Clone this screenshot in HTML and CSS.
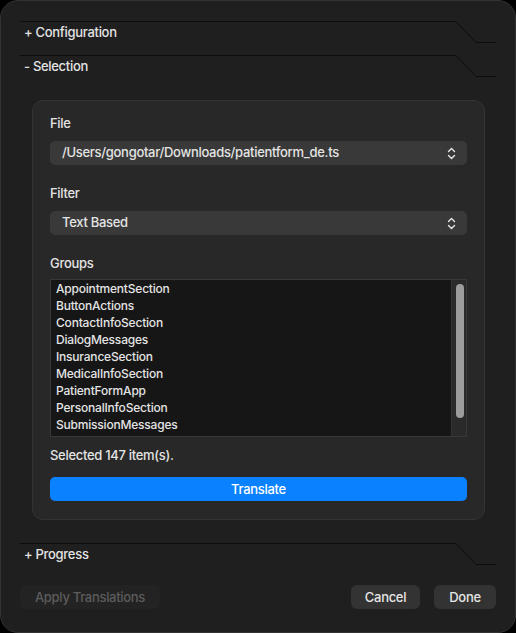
FILE: index.html
```html
<!DOCTYPE html>
<html lang="en">

<head>
    <meta charset="utf-8">
    <link rel="stylesheet" href="styles.css">
</head>

<body>

    <div class="tr-window">

        <div class="tr-section">
            <div class="tr-section-title">+ Configuration</div>
            <svg class="tr-section-tail" width="40" height="22" viewBox="0 0 40 22">
                <path d="M0 0.5 L20 21.5 H40" fill="none" stroke="#0c0c0c" stroke-width="1"/>
            </svg>
        </div>

        <div class="tr-section">
            <div class="tr-section-title">- Selection</div>
            <svg class="tr-section-tail" width="40" height="22" viewBox="0 0 40 22">
                <path d="M0 0.5 L20 21.5 H40" fill="none" stroke="#0c0c0c" stroke-width="1"/>
            </svg>
        </div>

        <div class="tr-group">
            <div class="tr-label">File</div>
            <div class="tr-popup">
                <span>/Users/gongotar/Downloads/patientform_de.ts</span>
                <svg width="9" height="13" viewBox="0 0 9 13">
                    <path d="M1.5 4.5 L4.5 1.5 L7.5 4.5 M1.5 8.5 L4.5 11.5 L7.5 8.5" fill="none" stroke="#e8e8e8" stroke-width="1.4" stroke-linecap="round" stroke-linejoin="round"/>
                </svg>
            </div>

            <div class="tr-label">Filter</div>
            <div class="tr-popup">
                <span>Text Based</span>
                <svg width="9" height="13" viewBox="0 0 9 13">
                    <path d="M1.5 4.5 L4.5 1.5 L7.5 4.5 M1.5 8.5 L4.5 11.5 L7.5 8.5" fill="none" stroke="#e8e8e8" stroke-width="1.4" stroke-linecap="round" stroke-linejoin="round"/>
                </svg>
            </div>

            <div class="tr-label tr-groups">Groups</div>
            <div class="tr-list">
                <div class="tr-list-items">
                    <div>AppointmentSection</div>
                    <div>ButtonActions</div>
                    <div>ContactInfoSection</div>
                    <div>DialogMessages</div>
                    <div>InsuranceSection</div>
                    <div>MedicalInfoSection</div>
                    <div>PatientFormApp</div>
                    <div>PersonalInfoSection</div>
                    <div>SubmissionMessages</div>
                </div>
                <div class="tr-scroll">
                    <div class="tr-scroll-thumb"></div>
                </div>
            </div>

            <div class="tr-label tr-count">Selected 147 item(s).</div>
            <div class="tr-primary">Translate</div>
        </div>

        <div class="tr-section tr-progress">
            <div class="tr-section-title">+ Progress</div>
            <svg class="tr-section-tail" width="40" height="22" viewBox="0 0 40 22">
                <path d="M0 0.5 L20 21.5 H40" fill="none" stroke="#0c0c0c" stroke-width="1"/>
            </svg>
        </div>

        <div class="tr-footer">
            <div class="tr-button tr-disabled">Apply Translations</div>
            <div class="tr-spacer"></div>
            <div class="tr-button tr-cancel">Cancel</div>
            <div class="tr-button tr-done">Done</div>
        </div>

    </div>

</body>

</html>
```

FILE: styles.css
```css
html,
body {
    margin: 0;
    padding: 0;
    background-color: #000000;
}

body {
    font-family: Inter, "Noto Sans", sans-serif;
    font-size: 13px;
    font-weight: 500;
    letter-spacing: -0.3px;
    color: #e4e4e4;
}

/* Window */
.tr-window {
    box-sizing: border-box;
    width: 516px;
    height: 633px;
    padding: 20px 19px 0 19px;
    background-color: #1f1f1f;
    border: 1px solid #333333;
    border-radius: 18px;
    overflow: hidden;
}

/* Section headers with the folded line */
.tr-section {
    display: flex;
    height: 34px;
}

.tr-section-title {
    flex: 1;
    border-top: 1px solid #0c0c0c;
    padding: 2px 0 0 4px;
    line-height: 16px;
}

.tr-section-tail {
    display: block;
    flex: none;
}

/* Group box */
.tr-group {
    margin: 11px 11px 0 12px;
    padding: 14px 17px 18px 17px;
    background-color: #282828;
    border: 1px solid #343434;
    border-radius: 11px;
    display: flex;
    flex-direction: column;
}

.tr-label {
    line-height: 16px;
    margin-bottom: 10px;
}

.tr-popup {
    height: 24px;
    display: flex;
    align-items: center;
    justify-content: space-between;
    padding: 0 11px 0 12px;
    background-color: #393939;
    border-radius: 5px;
    margin-bottom: 20px;
}

.tr-popup span {
    margin-top: -2px;
}

.tr-popup svg {
    display: block;
}

.tr-groups {
    margin-bottom: 8px;
}

/* List */
.tr-list {
    display: flex;
    height: 156px;
    background-color: #161616;
    border: 1px solid #383838;
    margin-bottom: 10px;
}

.tr-list-items {
    flex: 1;
    padding: 0 0 0 5px;
    font-size: 12px;
    letter-spacing: -0.2px;
}

.tr-list-items div {
    height: 17px;
    line-height: 17px;
}

.tr-scroll {
    width: 15px;
    background-color: #2a2a2a;
    border-left: 1px solid #333333;
    padding: 4px 0 0 4px;
    box-sizing: border-box;
}

.tr-scroll-thumb {
    width: 8px;
    height: 134px;
    border-radius: 4px;
    background-color: #9c9c9c;
}

.tr-count {
    margin-bottom: 14px;
}

.tr-primary {
    height: 24px;
    line-height: 24px;
    text-align: center;
    background-color: #0a82ff;
    color: #ffffff;
    border-radius: 5px;
}

.tr-progress {
    margin-top: 23px;
}

/* Bottom buttons */
.tr-footer {
    display: flex;
    gap: 14px;
    margin-top: 8px;
}

.tr-spacer {
    flex: 1;
}

.tr-button {
    height: 24px;
    line-height: 24px;
    text-align: center;
    border-radius: 6px;
    background-color: #333333;
    color: #e6e6e6;
}

.tr-disabled {
    width: 140px;
    background-color: #232323;
    color: #5c5c5c;
}

.tr-cancel {
    width: 69px;
}

.tr-done {
    width: 62px;
}
```
